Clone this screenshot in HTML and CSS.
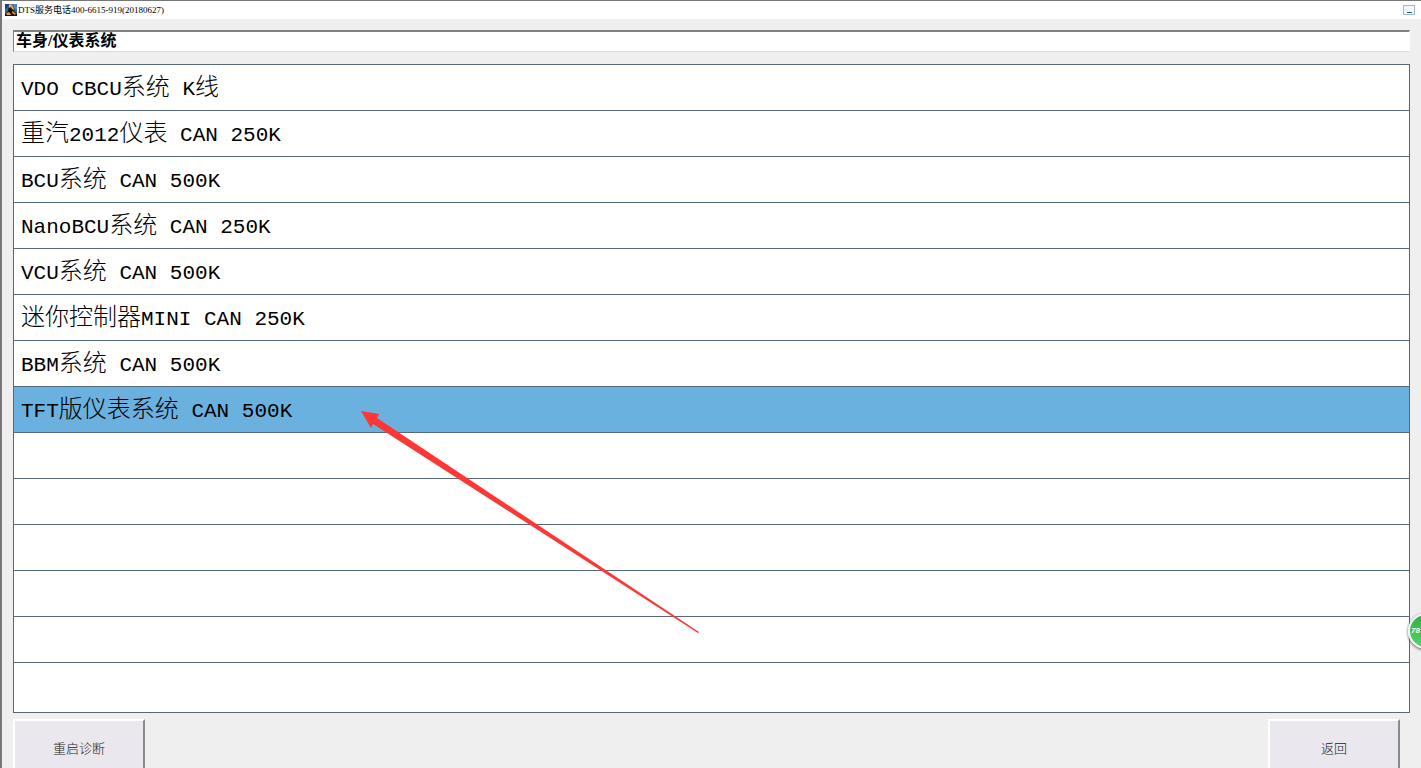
FILE: index.html
```html
<!DOCTYPE html>
<html lang="zh-CN">
<head>
  <meta charset="UTF-8" />
  <meta name="viewport" content="width=device-width, initial-scale=1.0" />
  <title>DTS服务电话400-6615-919(20180627)</title>
  <link rel="stylesheet" href="styles.css">
</head>
<body>

  <div class="window">
    <header class="title-bar">
      <svg class="app-icon" viewBox="0 0 12 12" aria-hidden="true">
        <rect width="12" height="12" fill="#2f62b8" />
        <path d="M0 0h4L2 4 0 5z" fill="#1b3f86" />
        <path d="M8 0h4v6L9 4z" fill="#4f82d0" />
        <path d="M0 12V10l3-3 1-5 2-1 2 3 1 3 3 3v2z" fill="#15130f" />
        <path d="M4 1l2-1 2 3 1 3-2-1-1-2-2 1z" fill="#f0b429" />
        <path d="M1 10l2-2 2 1 1 2H2z" fill="#e2a31f" />
        <path d="M7 7l2 1 2 2-1 1-3-2z" fill="#d8951c" />
      </svg>
      <span class="title">DTS服务电话400-6615-919(20180627)</span>
      <button class="minimize" type="button" aria-label="最小化"></button>
    </header>

    <main class="content">
      <input class="path" type="text" value="车身/仪表系统" aria-label="当前系统" readonly>

      <ul class="system-list">
        <li><button type="button">VDO CBCU<span class="zh">系统</span> K<span class="zh">线</span></button></li>
        <li><button type="button"><span class="zh">重汽</span>2012<span class="zh">仪表</span> CAN 250K</button></li>
        <li><button type="button">BCU<span class="zh">系统</span> CAN 500K</button></li>
        <li><button type="button">NanoBCU<span class="zh">系统</span> CAN 250K</button></li>
        <li><button type="button">VCU<span class="zh">系统</span> CAN 500K</button></li>
        <li><button type="button"><span class="zh">迷你控制器</span>MINI CAN 250K</button></li>
        <li><button type="button">BBM<span class="zh">系统</span> CAN 500K</button></li>
        <li class="selected"><button type="button">TFT<span class="zh">版仪表系统</span> CAN 500K</button></li>
        <li></li>
        <li></li>
        <li></li>
        <li></li>
        <li></li>
        <li></li>
      </ul>

      <div class="actions">
        <button type="button">重启诊断</button>
        <button type="button">返回</button>
      </div>
    </main>

    <!-- pointer to the selected row -->
    <svg class="arrow" viewBox="0 0 338 222" aria-hidden="true">
      <path d="M0 0L18 3L16 7L338 221L337 222L12 13L10 17Z" fill="#fd3735" />
    </svg>

    <div class="badge">78</div>
  </div>

</body>
</html>
```

FILE: styles.css
```css
* {
  box-sizing: border-box;
}

body {
  margin: 0;
  height: 100vh;
  overflow: hidden;
  background-color: #efefef;
  color: #000;
  font-family: "Liberation Serif", "Noto Sans CJK SC", serif;
}

button,
input {
  margin: 0;
  border-radius: 0;
  color: inherit;
  font-family: inherit;
}

.window {
  position: relative;
  height: 100vh;
  overflow: hidden;
  border-top: 1px solid #777;
  border-left: 2px solid #777;
}

.title-bar {
  display: flex;
  align-items: center;
  height: 18px;
  padding: 0 6px 0 3px;
  background-color: #fff;
}

.app-icon {
  width: 12px;
  height: 12px;
  margin-right: 1px;
}

.title {
  flex: 1;
  font-size: 9px;
  line-height: 18px;
}

.minimize {
  display: flex;
  align-items: flex-end;
  justify-content: center;
  width: 12px;
  height: 10px;
  padding: 0 0 1px;
  border: 1px solid #9dbccb;
  background-color: #f4f8fc;
}

.minimize::after {
  content: "";
  width: 5px;
  height: 1px;
  background-color: #2c4f9e;
}

.content {
  padding: 11px 11px 0;
}

.path {
  display: block;
  width: 100%;
  height: 22px;
  padding: 0 2px 5px;
  border: 1px solid #fff;
  border-top: 2px solid #808080;
  border-left-color: #808080;
  border-bottom-color: #dcdcdc;
  background-color: #fff;
  font-size: 16px;
  font-weight: bold;
  line-height: 14px;
  outline: none;
}

.system-list {
  margin: 12px 0 0;
  padding: 0;
  list-style: none;
  border: 1px solid #546a7b;
  background-color: #fff;
}

.system-list li {
  height: 46px;
  border-bottom: 1px solid #546a7b;
}

.system-list li:last-child {
  height: 49px;
  border-bottom: 0;
}

.system-list button {
  display: block;
  width: 100%;
  height: 45px;
  padding: 0 7px 5px;
  border: 0;
  background: none;
  font-family: "Liberation Mono", monospace;
  font-size: 21px;
  line-height: 40px;
  text-align: left;
}

.zh {
  font-family: "Noto Sans CJK SC", sans-serif;
  font-size: 24px;
  font-weight: 300;
}

.system-list .selected {
  background-color: #6ab1df;
}

.actions {
  display: flex;
  justify-content: space-between;
  padding: 6px 10px 0 0;
}

.actions button {
  width: 132px;
  height: 56px;
  border: 2px solid #fff;
  border-right: 2px solid #8a8a8a;
  border-bottom-color: #8a8a8a;
  background-color: #eae8ee;
  color: #222;
  font-size: 13px;
  font-weight: 300;
}

.arrow {
  position: absolute;
  top: 410px;
  left: 359px;
  width: 338px;
  height: 222px;
  pointer-events: none;
}

.badge {
  position: absolute;
  top: 612px;
  right: -23px;
  width: 36px;
  height: 36px;
  padding-left: 1px;
  border: 2px solid #f4f4f4;
  border-radius: 50%;
  background: linear-gradient(#2fae45, #55d466);
  box-shadow: 0 1px 3px #555;
  color: #fff;
  font-family: "Liberation Sans", sans-serif;
  font-size: 8px;
  font-style: italic;
  font-weight: bold;
  line-height: 32px;
}
```
